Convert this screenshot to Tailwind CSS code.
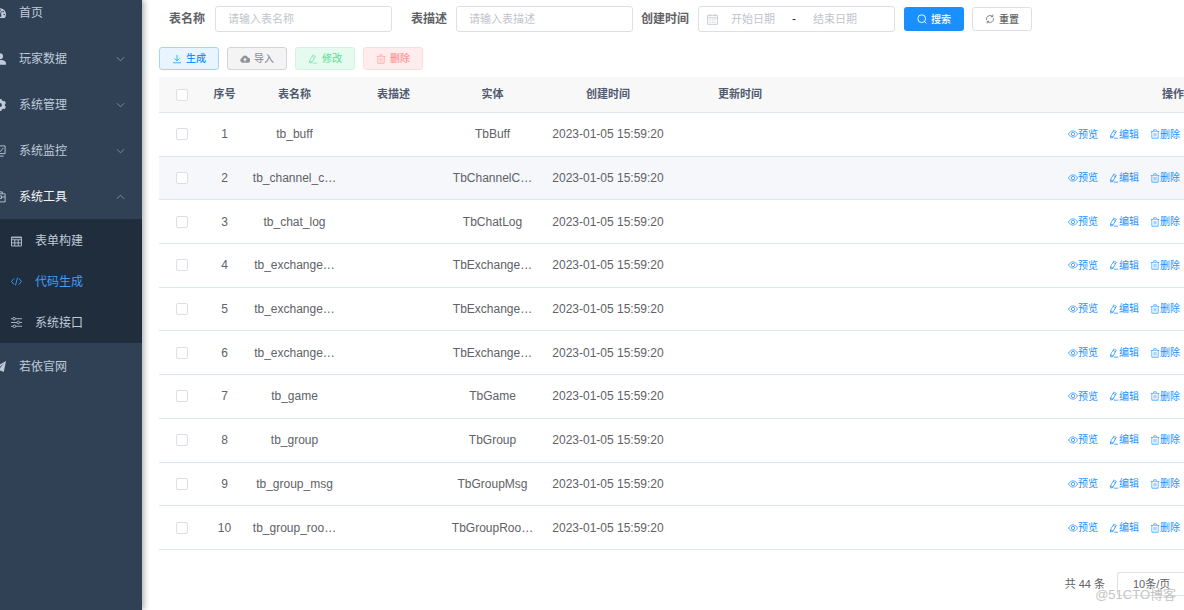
<!DOCTYPE html>
<html lang="zh-CN">
<head>
<meta charset="utf-8">
<title>代码生成</title>
<script src="https://cdn.jsdelivr.net/npm/@tailwindcss/browser@4"></script>
</head>
<body class="bg-white font-['Liberation_Sans','Noto_Sans_CJK_SC',sans-serif] text-[#606266]">
<svg class="hidden">
  <symbol id="view" viewBox="0 0 16 16"><g fill="none" stroke="currentColor" stroke-width="1.200"><path d="M.7 8C2.500 5 5 3 8 3s5.500 2 7.300 5c-1.800 3-4.300 5-7.300 5S2.500 11 .7 8z"/><circle cx="8" cy="8" r="2.700"/></g></symbol>
  <symbol id="edit" viewBox="0 0 1024 1024"><path fill="currentColor" d="m199.04 672.64 193.984 112 224-387.968-193.92-112-224 388.032zm-23.872 60.16 32.896 148.288 144.896-45.696L175.168 732.8zM455.04 229.248l193.92 112 56.704-98.112-193.984-112-56.64 98.112zM104.32 708.8l384-665.024 304.768 175.936L409.152 884.8h.064l-248.448 78.336L104.32 708.8zm384 254.272v-64h448v64h-448z"/></symbol>
  <symbol id="delete" viewBox="0 0 1024 1024"><path fill="currentColor" d="M160 256H96a32 32 0 0 1 0-64h256V95.936a32 32 0 0 1 32-32h256a32 32 0 0 1 32 32V192h256a32 32 0 1 1 0 64h-64v672a32 32 0 0 1-32 32H192a32 32 0 0 1-32-32V256zm448-64v-64H416v64h192zM224 896h576V256H224v640zm192-128a32 32 0 0 1-32-32V416a32 32 0 0 1 64 0v320a32 32 0 0 1-32 32zm192 0a32 32 0 0 1-32-32V416a32 32 0 0 1 64 0v320a32 32 0 0 1-32 32z"/></symbol>
  <symbol id="down" viewBox="0 0 10 6"><path fill="none" stroke="currentColor" d="M1 1l4 4 4-4"/></symbol>
</svg>
<div class="flex h-screen overflow-hidden">
  <aside class="z-10 w-[142px] shrink-0 overflow-hidden bg-[#304156] text-xs text-[#bfcbd9] shadow-[2px_0_6px_rgba(0,21,41,0.35)]">
    <nav class="-mt-[11px]">
      <a href="#" class="-ml-[6px] flex h-[46px] items-center gap-[13px] pt-0.5 pr-[17px]">
        <svg class="size-3" viewBox="0 0 16 16"><path fill="currentColor" d="M8 1.500A8 8 0 0 0 0 9.500c0 1.900.6 3.500 1.600 5h12.800c1-1.500 1.600-3.100 1.600-5a8 8 0 0 0-8-8z"/><g fill="#304156"><circle cx="8" cy="4.200" r="1.100"/><circle cx="3.800" cy="6" r="1.100"/><circle cx="2.400" cy="10" r="1.100"/><circle cx="13.600" cy="10" r="1.100"/><circle cx="12.200" cy="6" r="1.100"/><circle cx="8" cy="11.500" r="1.900"/><path d="M7.400 11L9.300 5.500l1 .3-1.300 5.700z"/></g></svg>
        <span class="grow">首页</span>
      </a>
      <a href="#" class="-ml-[6px] flex h-[46px] items-center gap-[13px] pt-0.5 pr-[17px]">
        <svg class="size-3" viewBox="0 0 16 16"><g fill="currentColor"><circle cx="8" cy="4.300" r="4"/><path d="M0 15.500v-2C0 11 3 9.800 5 9.200h6c2 .6 5 1.800 5 4.300v2z"/></g></svg>
        <span class="grow">玩家数据</span>
        <svg class="h-[6px] w-[9px] text-[#8792a0]"><use href="#down"/></svg>
      </a>
      <a href="#" class="-ml-[6px] flex h-[46px] items-center gap-[13px] pt-0.5 pr-[17px]">
        <svg class="size-3" viewBox="0 0 16 16"><circle cx="8" cy="8" r="4.600" fill="none" stroke="currentColor" stroke-width="4"/><path stroke="currentColor" stroke-width="4" d="M8 0v3M8 13v3M1 4l2.700 1.500M12.300 10.500L15 12M1 12l2.700-1.500M12.300 5.500L15 4"/></svg>
        <span class="grow">系统管理</span>
        <svg class="h-[6px] w-[9px] text-[#8792a0]"><use href="#down"/></svg>
      </a>
      <a href="#" class="-ml-[6px] flex h-[46px] items-center gap-[13px] pt-0.5 pr-[17px]">
        <svg class="size-3" viewBox="0 0 16 16" fill="none" stroke="currentColor" stroke-width="1.200"><path d="M.6 1.200h14.200v10.300H.6zM3 14.800h10M5 6l3 3 4.500-5"/></svg>
        <span class="grow">系统监控</span>
        <svg class="h-[6px] w-[9px] text-[#8792a0]"><use href="#down"/></svg>
      </a>
      <a href="#" class="-ml-[6px] flex h-[46px] items-center gap-[13px] pt-0.5 pr-[17px]">
        <svg class="size-3" viewBox="0 0 16 16" fill="none" stroke="currentColor" stroke-width="1.200"><path d="M.6 3.800h14.200v10.700H.6zM4.500 3.800V1.200h6.500v2.600M.6 8h5.400M10 8h4.800M6 6.500h4v3.500H6z"/></svg>
        <span class="grow text-[#f4f4f5]">系统工具</span>
        <svg class="h-[6px] w-[9px] rotate-180 text-[#8792a0]"><use href="#down"/></svg>
      </a>
      <div class="grid h-[124px] grid-rows-3 bg-[#1f2d3d] pt-0.5 pl-[11px]">
        <a href="#" class="flex items-center gap-[13px]">
          <svg class="size-[11px]" viewBox="0 0 16 16" fill="none" stroke="currentColor" stroke-width="1.300"><path d="M.8 1.500h14.400v13H.8zM.8 5.500h14.400M.8 10h14.400M5.500 5.500v9M10.500 5.500v9M.8 2.500h14.400"/></svg>
          <span>表单构建</span>
        </a>
        <a href="#" class="flex items-center gap-[13px] text-[#409eff]">
          <svg class="size-[11px]" viewBox="0 0 16 16" fill="none" stroke="currentColor" stroke-width="1.300"><path d="M4.500 3.500L.8 8l3.700 4.500M11.500 3.500L15.200 8l-3.700 4.500M9.500 2.500l-3 11"/></svg>
          <span>代码生成</span>
        </a>
        <a href="#" class="flex items-center gap-[13px]">
          <svg class="size-[11px]" viewBox="0 0 16 16" fill="none" stroke="currentColor" stroke-width="1.200"><path d="M0 2.500h2.500M6.500 2.500H16M0 8h8.500M12.500 8H16M0 13.500h3M7 13.500h9"/><circle cx="4.500" cy="2.500" r="1.900"/><circle cx="10.500" cy="8" r="1.900"/><circle cx="5" cy="13.500" r="1.900"/></svg>
          <span>系统接口</span>
        </a>
      </div>
      <a href="#" class="-ml-[6px] flex h-[46px] items-center gap-[13px] pt-0.5 pr-[17px]">
        <svg class="size-3" viewBox="0 0 16 16"><path fill="currentColor" d="M16 0L0 9l4 1.800L13.500 3 6 11.500V16l2.700-3.200 4.300 1.700z"/></svg>
        <span class="grow">若依官网</span>
      </a>
    </nav>
  </aside>

  <main class="min-w-0 grow overflow-hidden pt-[6px] pl-[17px]">
    <form class="flex items-center">
      <label for="tname" class="w-14 shrink-0 pr-[10px] text-right text-xs font-bold whitespace-nowrap">表名称</label>
      <input id="tname" placeholder="请输入表名称" class="h-[26px] w-[177px] rounded-[3px] border border-[#dcdfe6] px-3 text-[11px] placeholder:text-[#c0c4cc]">
      <label for="tdesc" class="ml-2 w-14 shrink-0 pr-[9px] text-right text-xs font-bold whitespace-nowrap">表描述</label>
      <input id="tdesc" placeholder="请输入表描述" class="h-[26px] w-[177px] rounded-[3px] border border-[#dcdfe6] px-3 text-[11px] placeholder:text-[#c0c4cc]">
      <label for="dstart" class="ml-2 shrink-0 pr-[9px] text-right text-xs font-bold whitespace-nowrap">创建时间</label>
      <div class="flex h-[26px] w-[197px] items-center rounded-[3px] border border-[#dcdfe6] pl-2 text-[11px]">
        <svg class="size-[11px] shrink-0 text-[#c0c4cc]" viewBox="0 0 16 16" fill="none" stroke="currentColor" stroke-width="1.200"><path d="M.8 2h14.400v13H.8zM.8 5.500h14.400M4.500 0v3.500M11.500 0v3.500M3.500 8.500h2M7 8.500h2M10.500 8.500h2M3.500 11.800h2M7 11.800h2M10.500 11.800h2"/></svg>
        <input id="dstart" placeholder="开始日期" class="w-[70px] text-center placeholder:text-[#c0c4cc]">
        <span class="w-3 text-center text-xs text-[#303133]">-</span>
        <input aria-label="结束日期" placeholder="结束日期" class="w-[70px] text-center placeholder:text-[#c0c4cc]">
      </div>
      <button type="button" class="ml-[9px] flex h-6 w-[60px] items-center justify-center gap-1 rounded-[3px] bg-[#1890ff] text-[10px] font-medium text-white">
        <svg class="size-[10px]" viewBox="0 0 16 16" fill="none" stroke="currentColor" stroke-width="1.500"><circle cx="7.500" cy="7.500" r="6.200"/><path d="M12 12l3 3"/></svg>搜索</button>
      <button type="button" class="ml-2 flex h-6 w-[60px] items-center justify-center gap-1 rounded-[3px] border border-[#dcdfe6] text-[10px] font-medium">
        <svg class="size-[10px]" viewBox="0 0 16 16" fill="none" stroke="currentColor" stroke-width="1.200"><path d="M2.500 9.500A5.800 5.800 0 0 1 12 3.800M13.500 6.500A5.800 5.800 0 0 1 4 12.200M12.500 1v3.300H9.200M3.500 15v-3.300h3.300"/></svg>重置</button>
    </form>

    <div class="mt-[15px] flex gap-2 text-[10px] font-medium">
      <button class="flex h-[23px] w-[60px] items-center justify-center gap-1 rounded-[3px] border border-[#a3d3ff] bg-[#e8f4ff] text-[#1890ff]">
        <svg class="size-[10px]" viewBox="0 0 16 16" fill="none" stroke="currentColor" stroke-width="1.200"><path d="M8 1.500v9M4 7l4 4 4-4M1.500 14h13"/></svg>生成</button>
      <button class="flex h-[23px] w-[60px] items-center justify-center gap-1 rounded-[3px] border border-[#d3d4d6] bg-[#f4f4f5] text-[#909399]">
        <svg class="size-[10px]" viewBox="0 0 16 16"><path fill="currentColor" d="M4 14a4 4 0 0 1-.8-7.800A5 5 0 0 1 12.800 6 4 4 0 0 1 12 14z"/><path fill="#f4f4f5" d="M8 6l3 3.500H9V12H7V9.500H5z"/></svg>导入</button>
      <button disabled class="flex h-[23px] w-[60px] items-center justify-center gap-1 rounded-[3px] border border-[#d0f5e0] bg-[#e7faf0] text-[#71e2a3]">
        <svg class="size-[10px]"><use href="#edit"/></svg>修改</button>
      <button disabled class="flex h-[23px] w-[60px] items-center justify-center gap-1 rounded-[3px] border border-[#ffdbdb] bg-[#ffeded] text-[#ff9292]">
        <svg class="size-[10px]"><use href="#delete"/></svg>删除</button>
    </div>

    <table class="mt-[7px] h-[473px] w-full table-fixed border-separate border-spacing-0 text-center text-xs">
      <colgroup><col class="w-[45px]"><col class="w-[41px]"><col class="w-[99px]"><col class="w-[99px]"><col class="w-[99px]"><col class="w-[132px]"><col class="w-[132px]"><col></colgroup>
      <thead class="bg-[#f8f8f9] text-[11px] text-[#515a6e] *:*:border-b *:*:border-[#dfe6ec]">
        <tr class="h-9"><th><input type="checkbox" aria-label="全选" class="block mx-auto size-3 appearance-none rounded-xs border border-[#dcdfe6] bg-white"></th><th>序号</th><th>表名称</th><th>表描述</th><th>实体</th><th>创建时间</th><th>更新时间</th><th class="text-right">操作</th></tr>
      </thead>
      <tbody id="rows" class="*:*:border-b *:*:border-[#dfe6ec]"></tbody>
    </table>

    <div class="mt-[22px] flex items-center justify-end text-[11px]">
      <span>共 44 条</span>
      <select aria-label="每页条数" class="ml-3 h-6 w-[67px] appearance-none rounded-l-[3px] border border-r-0 border-[#dcdfe6] pl-[15px]"><option>10条/页</option></select>
    </div>
  </main>
</div>
<div class="pointer-events-none absolute right-2 bottom-[5px] z-20 text-[13px] leading-5 text-[#c4c4c4]">@51CTO博客</div>
<script>
const data = [
  ['tb_buff','TbBuff'],['tb_channel_c…','TbChannelC…'],['tb_chat_log','TbChatLog'],
  ['tb_exchange…','TbExchange…'],['tb_exchange…','TbExchange…'],['tb_exchange…','TbExchange…'],
  ['tb_game','TbGame'],['tb_group','TbGroup'],['tb_group_msg','TbGroupMsg'],['tb_group_roo…','TbGroupRoo…']
];
const action = (icon, text) => `<button class="flex items-center"><svg class="size-[10px]"><use href="#${icon}"/></svg>${text}</button>`;
document.getElementById('rows').innerHTML = data.map(([name, entity], i) => `
<tr class="nth-2:bg-[#f5f7fa]">
  <td><input type="checkbox" aria-label="选择 ${i + 1}" class="block mx-auto size-3 appearance-none rounded-xs border border-[#dcdfe6] bg-white"></td>
  <td>${i + 1}</td><td>${name}</td><td></td><td>${entity}</td><td>2023-01-05 15:59:20</td><td></td>
  <td><div class="flex justify-end gap-[11px] pr-1 text-[10px] text-[#1890ff]">${action('view', '预览')}${action('edit', '编辑')}${action('delete', '删除')}</div></td>
</tr>`).join('');
</script>
</body>
</html>
